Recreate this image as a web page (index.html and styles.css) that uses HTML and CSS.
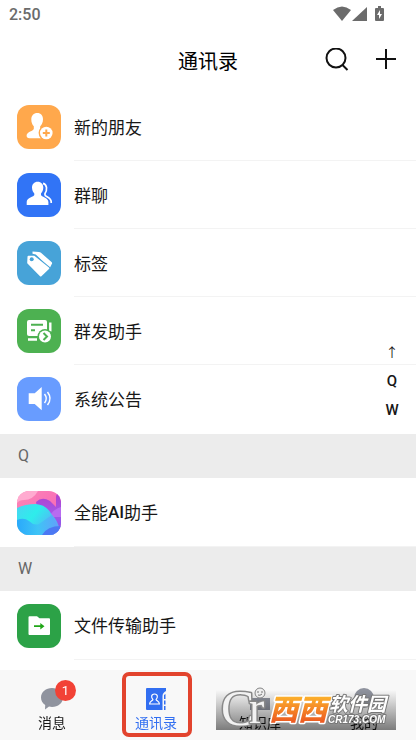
FILE: index.html
```
<!DOCTYPE html>
<html lang="zh-CN">
<head>
  <meta charset="UTF-8">
  <title>通讯录</title>
  <meta name="viewport" content="width=device-width, initial-scale=1.0">
  <link rel="stylesheet" href="styles.css">
</head>
<body>
  <div class="status-bar">
    <span>2:50</span>
    <svg width="52" height="16" viewBox="0 0 52 16" fill="#6b6b6b">
      <path d="M0 4Q9-3 18 4L9 15Z"/>
      <path d="M34 1V15H19Z"/>
      <path d="M45 0h3v2h2q1 0 1 1v11q0 1-1 1h-7q-1 0-1-1V3q0-1 1-1h2z"/>
      <path d="M47 4l-3 5h2v4l3-5h-2z" fill="#fff"/>
    </svg>
  </div>

  <header class="header">
    <h1>通讯录</h1>
    <div class="actions">
      <button type="button" aria-label="搜索">
        <svg width="24" height="24" viewBox="0 0 24 24" fill="none" stroke="#111" stroke-width="2">
          <circle cx="11" cy="10" r="9.5"/>
          <path d="M17.500 17l5 5"/>
        </svg>
      </button>
      <button type="button" aria-label="添加">
        <svg width="24" height="24" viewBox="0 0 24 24" stroke="#111" stroke-width="2">
          <path d="M12 1v20M2 11h20"/>
        </svg>
      </button>
    </div>
  </header>

  <main>
    <div class="list menu">
      <a class="row" href="#">
        <svg class="icon orange" viewBox="0 0 44 44" fill="#fff">
          <path d="M20.300 8c3.600 0 5.700 2.600 5.700 6.200 0 3-1.200 5.400-2.800 7v2.300c0 1 7 2 7 5.500v4.300H12.500c-2 0-2.900-1-2.900-2.800 0-3.800 7.200-4.500 7.200-6.800v-2.500c-1.600-1.600-2.500-4-2.500-7 0-3.600 2.400-6.200 6-6.200z"/>
          <circle cx="29.300" cy="28" r="7.700" fill="#ffa84c"/>
          <circle cx="29.300" cy="28" r="6.300"/>
          <path d="M29.300 24.500v7M25.800 28h7" stroke="#ffa84c" stroke-width="2"/>
        </svg>
        <span class="name">新的朋友</span>
      </a>
      <a class="row" href="#">
        <svg class="icon blue" viewBox="0 0 44 44" fill="#fff">
          <path d="M20.700 8.700c3.500 0 5.600 2.600 5.600 5.800 0 2.600-1 4.600-2.300 5.900v1.700c0 1.600 7.400 2.600 7.400 6.900v3H9.700v-3c0-4.300 7.600-5.300 7.600-6.900v-1.700c-1.300-1.300-2.300-3.300-2.300-5.900 0-3.200 2.200-5.800 5.700-5.800z"/>
          <path d="M26 10.300c4.500 1 4.200 7 2 10.100v1.700c0 1.500 6.200 2.600 6.200 6.600V30" fill="none" stroke="#fff" stroke-width="1.700"/>
        </svg>
        <span class="name">群聊</span>
      </a>
      <a class="row" href="#">
        <svg class="icon sky" viewBox="0 0 44 44" fill="#fff" stroke-linejoin="round">
          <path d="M15.500 10.500l6.500.5q1 0 2 .8l10.500 9.200q1 1 .3 2l-2 4-14-13.500-3.300-.8z"/>
          <path d="M11.500 15.700l5.500.1 14.300 11.500-7.600 7.200-12.500-12.700z" stroke="#47a3d8" stroke-width="4"/>
          <path d="M11.500 15.700l5.500.1 14.300 11.500-7.600 7.200-12.500-12.700z" stroke="#fff" stroke-width="2"/>
          <circle cx="14.700" cy="18.200" r="2" fill="#47a3d8"/>
        </svg>
        <span class="name">标签</span>
      </a>
      <a class="row" href="#">
        <svg class="icon green" viewBox="0 0 44 44" fill="#fff">
          <rect x="10" y="11" width="20" height="16" rx="2"/>
          <path d="M14 15.700h12M14 21.200h4" stroke="#4db151" stroke-width="2"/>
          <path d="M11 30.500h9M33.300 13.500v9" stroke="#fff" stroke-width="2.400"/>
          <circle cx="28" cy="27.500" r="7.500" fill="#4db151"/>
          <circle cx="28" cy="27.500" r="6"/>
          <path d="M26.500 24l3.500 3.500-3.500 3.500" fill="none" stroke="#4db151" stroke-width="2"/>
        </svg>
        <span class="name">群发助手</span>
      </a>
      <a class="row" href="#">
        <svg class="icon periwinkle" viewBox="0 0 44 44" fill="#fff">
          <path d="M11.700 16.300h6l7-6.300v23.300l-7-6.300h-6z"/>
          <path d="M27.500 17q3.500 4.500 0 9M30.500 15q5 6.500 0 13" fill="none" stroke="#fff" stroke-width="1.500"/>
        </svg>
        <span class="name">系统公告</span>
      </a>
    </div>

    <h2 class="section">Q</h2>
    <div class="list">
      <a class="row" href="#">
        <svg class="icon" viewBox="0 0 44 44">
          <defs>
            <linearGradient id="pink" x2="1" y2="1">
              <stop offset="0" stop-color="#fc86b5"/>
              <stop offset="1" stop-color="#f65fb8"/>
            </linearGradient>
            <linearGradient id="violet" x2="0" y2="1">
              <stop offset="0" stop-color="#b03fc9"/>
              <stop offset=".5" stop-color="#a557e8"/>
              <stop offset="1" stop-color="#7657ef"/>
            </linearGradient>
            <linearGradient id="cyan" x2="1" y2=".6">
              <stop offset="0" stop-color="#4ad4f3"/>
              <stop offset=".45" stop-color="#2eedeb"/>
              <stop offset="1" stop-color="#60a6f8"/>
            </linearGradient>
            <linearGradient id="azure" x2="1">
              <stop offset="0" stop-color="#2aa9fb"/>
              <stop offset=".5" stop-color="#3fc4f6"/>
              <stop offset="1" stop-color="#62a0fa"/>
            </linearGradient>
          </defs>
          <rect width="44" height="44" fill="url(#pink)"/>
          <path d="M0 0h21Q16 9 7 9 2 9 0 12z" fill="#ffabd0"/>
          <path d="M19 11q6-6 14-1 4 4 6 6V6q0-4 5-5v43H25z" fill="url(#violet)"/>
          <path d="M33 24q4-6 11-8v10H36z" fill="#b86bf0"/>
          <path d="M0 17q8-4 19-4 11 1 16 11 5 5 7 12v8H0z" fill="url(#cyan)"/>
          <path d="M0 29q7-3 12 1 5 5 10 3 7-5 13-9 6 8 7 20H0z" fill="url(#azure)"/>
          <path d="M25 44q5-9 19-9v9z" fill="#4c78f3"/>
        </svg>
        <span class="name">全能<b>AI</b>助手</span>
      </a>
    </div>

    <h2 class="section">W</h2>
    <div class="list">
      <a class="row" href="#">
        <svg class="icon file" viewBox="0 0 44 44" fill="#fff">
          <path d="M12.500 12.300H20l2.500 2H32q1 0 1 1V30q0 1-1 1H12.500q-1 0-1-1V13.300q0-1 1-1z"/>
          <path d="M17 21.300h6.300V19l4.200 3.200-4.200 3.200v-2.300H17z" fill="#20a617"/>
        </svg>
        <span class="name">文件传输助手</span>
      </a>
    </div>

    <nav class="letters" aria-label="索引">
      <a class="top" href="#">↑</a>
      <a href="#">Q</a>
      <a href="#">W</a>
    </nav>
  </main>

  <nav class="tabs">
    <a class="tab" href="#">
      <span class="tab-icon">
        <svg width="24" height="24" viewBox="0 0 24 24" fill="#8f939e">
          <path d="M12 1c6 0 11 4 11 9.500S18 20 12 20q-1.500 0-3-.4L5 22.500l.2-4.500C2.500 16.200 1 13.500 1 10.500 1 5 6 1 12 1z"/>
        </svg>
        <span class="badge">1</span>
      </span>
      <span>消息</span>
    </a>
    <a class="tab active" href="#">
      <span class="tab-icon">
        <svg width="24" height="24" viewBox="0 0 24 24" fill="#326ff1">
          <path d="M3 1h19v3q-3.500 2-3.500 5v14H3q-1 0-1-1V2q0-1 1-1z"/>
          <path d="M20 8l1.500-1v5H20zM20 13.500h1.500v4H20zM20 19h1.500v4H20z"/>
          <path d="M10.500 7c3.800 0 3.200 4 1.600 5.400 0 1.500 3.300 1.500 3.300 4.600H5.600c0-3.100 3.300-3.100 3.300-4.600C7.300 11 6.700 7 10.500 7z" fill="none" stroke="#fff" stroke-width="1.200"/>
        </svg>
      </span>
      <span>通讯录</span>
    </a>
    <a class="tab" href="#">
      <span class="tab-icon">
        <svg width="24" height="24" viewBox="0 0 24 24" fill="#8f939e">
          <circle cx="12" cy="6" r="5"/>
          <path d="M2 11h20v12H2z"/>
        </svg>
      </span>
      <span>知识库</span>
    </a>
    <a class="tab" href="#">
      <span class="tab-icon">
        <svg width="24" height="24" viewBox="0 0 24 24" fill="#8f939e">
          <circle cx="12" cy="11" r="10"/>
        </svg>
      </span>
      <span>我的</span>
    </a>

    <div class="shade"></div>
    <svg class="watermark" width="180" height="46" viewBox="0 0 180 46">
      <defs>
        <linearGradient id="amber" x2="0" y2="1">
          <stop offset="0.2" stop-color="#fdb82c"/>
          <stop offset="1" stop-color="#e9461f"/>
        </linearGradient>
      </defs>
      <g class="mark-letters">
        <text x="5" y="41" font-size="50">C</text>
        <text x="33" y="39" font-size="46">r</text>
      </g>
      <circle cx="44" cy="9" r="5" fill="#eee" stroke="#888"/>
      <path d="M41 8h2M45 8h2M42 11q2 1 4-1" stroke="#777" fill="none"/>
      <text class="mark-name" x="53" y="36" font-size="29">西西</text>
      <text class="mark-site" x="113" y="27" font-size="19">软件园</text>
      <text class="mark-site" x="112" y="39" font-size="10">CR173.COM</text>
    </svg>
  </nav>
</body>
</html>
```

FILE: styles.css
```
* {
  box-sizing: border-box;
}

body {
  margin: 0;
  min-height: 100vh;
  display: flex;
  flex-direction: column;
  font-family: Roboto, "Noto Sans CJK SC", sans-serif;
  background: #fff;
  color: #171717;
}

a {
  color: inherit;
  text-decoration: none;
}

svg {
  display: block;
}

.status-bar {
  display: flex;
  justify-content: space-between;
  align-items: center;
  height: 28px;
  padding: 0 31px 0 9px;
  font-size: 16px;
  font-weight: 500;
  color: #6b6b6b;
}

.header {
  display: grid;
  grid-template-columns: 1fr auto 1fr;
  align-items: center;
  height: 64px;
  padding: 0 18px;
}

.header h1 {
  grid-column: 2;
  margin: 0;
  font-size: 20px;
  font-weight: 400;
  color: #000;
}

.actions {
  display: flex;
  justify-content: flex-end;
  gap: 25px;
}

.actions button {
  padding: 0;
  border: 0;
  background: none;
}

main {
  flex: 1;
  position: relative;
}

.row {
  display: flex;
  align-items: center;
  height: 69px;
  padding-left: 17px;
}

.menu {
  padding: 1px 0;
}

.menu .row {
  height: 68px;
}

.icon {
  width: 44px;
  height: 44px;
  margin-right: 13px;
  border-radius: 12px;
}

.orange { background: #ffa84c; }
.blue { background: #3174f6; }
.sky { background: #47a3d8; }
.green { background: #4db151; }
.periwinkle { background: #689cff; }
.file { background: #2ca247; }

.name {
  flex: 1;
  display: flex;
  align-items: center;
  align-self: stretch;
  padding-bottom: 1px;
  border-bottom: 1px solid #f3f3f3;
  font-size: 17px;
}

.menu .row:last-child .name {
  border-bottom: 0;
}

.name b {
  font-weight: 500;
}

.section {
  margin: 0;
  padding-left: 18px;
  line-height: 44px;
  font-size: 16px;
  font-weight: 400;
  color: #666;
  background: #ececec;
}

/* letter index floating over the list */
.letters {
  position: absolute;
  top: 246px;
  right: 14px;
  width: 20px;
  text-align: center;
  font-size: 15px;
  font-weight: 500;
  line-height: 29px;
}

.letters a {
  display: block;
}

.letters .top {
  font-size: 13px;
  font-weight: 400;
}

.tabs {
  position: sticky;
  bottom: 0;
  display: flex;
  height: 70px;
  background: #f8f8f8;
}

.tab {
  flex: 1;
  position: relative;
  display: flex;
  flex-direction: column;
  align-items: center;
  padding-top: 17px;
  gap: 2px;
  font-size: 14px;
  line-height: 20px;
}

.tab-icon {
  position: relative;
}

.active {
  color: #326ff1;
}

.active::after {
  content: "";
  position: absolute;
  top: 2px;
  bottom: 3px;
  left: 18px;
  right: 16px;
  border: 4px solid #e2432d;
  border-radius: 7px;
}

.badge {
  position: absolute;
  top: -7px;
  left: 15px;
  width: 21px;
  height: 21px;
  border-radius: 50%;
  background: #f24236;
  color: #fff;
  font-size: 13px;
  line-height: 21px;
  text-align: center;
}

/* site mark over the last two tabs */
.shade {
  position: absolute;
  right: 20px;
  bottom: 10px;
  width: 180px;
  height: 40px;
  background: linear-gradient(#fff, #808080);
  mix-blend-mode: multiply;
}

.watermark {
  position: absolute;
  right: 20px;
  bottom: 10px;
}

.watermark text {
  paint-order: stroke;
  stroke-linejoin: round;
}

.mark-letters {
  font-family: "Liberation Serif", serif;
  fill: #f2f2f2;
  stroke: #888;
  stroke-width: 3px;
}

.mark-name {
  font-family: "Noto Sans CJK SC", sans-serif;
  font-style: italic;
  font-weight: 900;
  fill: url(#amber);
  stroke: #fff;
  stroke-width: 3px;
}

.mark-site {
  font-family: "Liberation Sans", "Noto Sans CJK SC", sans-serif;
  font-style: italic;
  font-weight: 700;
  fill: #fff;
  stroke: #777;
  stroke-width: 2px;
}
```
